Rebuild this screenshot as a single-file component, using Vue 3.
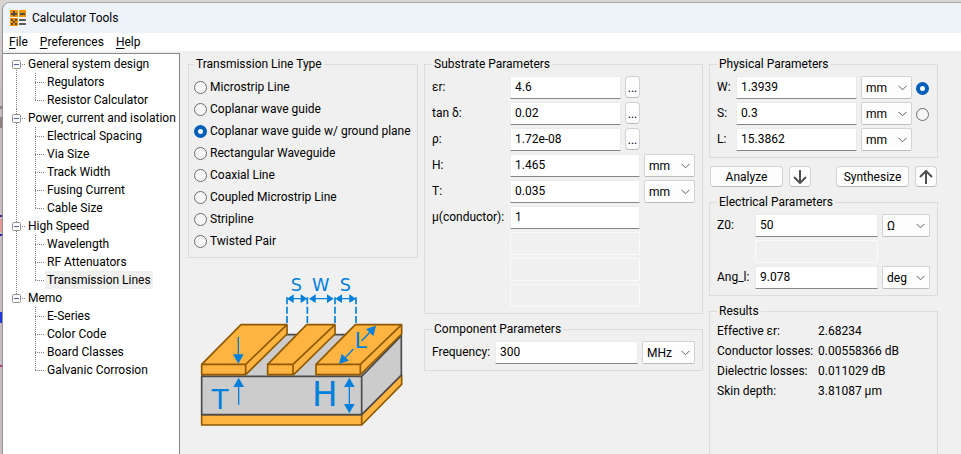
<script setup>
import { reactive, ref } from 'vue'

const tree = reactive([
  { label: 'General system design', open: true, items: ['Regulators', 'Resistor Calculator'] },
  {
    label: 'Power, current and isolation',
    open: true,
    items: ['Electrical Spacing', 'Via Size', 'Track Width', 'Fusing Current', 'Cable Size'],
  },
  { label: 'High Speed', open: true, items: ['Wavelength', 'RF Attenuators', 'Transmission Lines'] },
  { label: 'Memo', open: true, items: ['E-Series', 'Color Code', 'Board Classes', 'Galvanic Corrosion'] },
])
const page = ref('Transmission Lines')

const lineTypes = [
  'Microstrip Line',
  'Coplanar wave guide',
  'Coplanar wave guide w/ ground plane',
  'Rectangular Waveguide',
  'Coaxial Line',
  'Coupled Microstrip Line',
  'Stripline',
  'Twisted Pair',
]
const lineType = ref('Coplanar wave guide w/ ground plane')

const lengths = ['mm', 'um', 'cm', 'mil', 'inch']
const substrate = reactive([
  { id: 'er', label: 'εr:', value: '4.6', more: true },
  { id: 'tand', label: 'tan δ:', value: '0.02', more: true },
  { id: 'rho', label: 'ρ:', value: '1.72e-08', more: true },
  { id: 'h', label: 'H:', value: '1.465', unit: 'mm' },
  { id: 't', label: 'T:', value: '0.035', unit: 'mm' },
  { id: 'mu', label: 'μ(conductor):', value: '1' },
  { id: 'x1', label: '', value: '', off: true },
  { id: 'x2', label: '', value: '', off: true },
  { id: 'x3', label: '', value: '', off: true },
])

const frequency = reactive({ value: '300', unit: 'MHz' })

const physical = reactive([
  { id: 'w', label: 'W:', value: '1.3939', unit: 'mm', target: true },
  { id: 's', label: 'S:', value: '0.3', unit: 'mm', target: true },
  { id: 'l', label: 'L:', value: '15.3862', unit: 'mm', target: false },
])
const solveFor = ref('w')

const electrical = reactive([
  { id: 'z0', label: 'Z0:', value: '50', unit: 'Ω', units: ['Ω', 'kΩ'] },
  { id: 'x4', label: '', value: '', off: true },
  { id: 'ang', label: 'Ang_l:', value: '9.078', unit: 'deg', units: ['deg', 'rad'] },
])

const results = [
  ['Effective εr:', '2.68234'],
  ['Conductor losses:', '0.00558366 dB'],
  ['Dielectric losses:', '0.011029 dB'],
  ['Skin depth:', '3.81087 µm'],
]
</script>

<template>
  <div class="desktop">
    <div class="window">
      <header class="titlebar">
        <svg class="app-icon" viewBox="0 0 16 16" aria-hidden="true">
          <g fill="#f39200">
            <rect width="8" height="7" rx="1" />
            <rect x="9" width="7" height="7" rx="1" />
            <rect y="8" width="8" height="8" rx="1" />
          </g>
          <rect x="9" y="8" width="7" height="8" fill="#f4f4f4" />
          <path d="M1 4h6M4 1v5M10 4h5" stroke="#4d4d4d" stroke-width="2" />
          <path d="M1 9h2v2H1zM5 9h2v2H5zM3 11h2v2H3zM1 13h2v2H1zM5 13h2v2H5z" fill="#5a4a30" />
          <path d="M9 10h7M9 14h7" stroke="#5c5c5c" stroke-width="2" />
        </svg>
        <span>Calculator Tools</span>
      </header>

      <nav class="menubar">
        <button type="button"><u>F</u>ile</button>
        <button type="button"><u>P</u>references</button>
        <button type="button"><u>H</u>elp</button>
      </nav>

      <div class="body">
        <aside class="tree">
          <ul class="groups">
            <li v-for="group in tree" :key="group.label" class="group">
              <div class="branch">
                <button
                  type="button"
                  class="toggle"
                  :aria-label="group.label"
                  :aria-expanded="group.open"
                  @click="group.open = !group.open"
                >
                  <svg viewBox="0 0 9 9">
                    <rect x=".5" y=".5" width="8" height="8" rx="1" fill="#fafafa" stroke="#919191" />
                    <path :d="group.open ? 'M2 4.5h5' : 'M2 4.5h5M4.5 2v5'" stroke="#4b63a7" />
                  </svg>
                </button>
                <span>{{ group.label }}</span>
              </div>
              <ul v-if="group.open" class="leaves">
                <li v-for="item in group.items" :key="item">
                  <button type="button" :class="{ selected: page === item }" @click="page = item">{{ item }}</button>
                </li>
              </ul>
            </li>
          </ul>
        </aside>

        <main class="panels">
          <div class="column">
            <fieldset class="types">
              <legend>Transmission Line Type</legend>
              <label v-for="name in lineTypes" :key="name">
                <input v-model="lineType" type="radio" name="line-type" :value="name" />
                {{ name }}
              </label>
            </fieldset>

            <svg class="drawing" viewBox="-6 0 690 567" role="img" aria-label="Coplanar wave guide with ground plane">
              <g stroke-width="5" stroke-linejoin="round">
                <path d="M35 449H515L635 330V358L515 480H35Z" fill="#ffb340" stroke="#8f5902" />
                <path d="M515 449V480" stroke="#8f5902" />
                <path d="M35 334L160 209H634V330L515 449H35Z" fill="#ccc" stroke="#4b4b4b" />
                <path d="M35 334H515V449M515 334L634 212" fill="none" stroke="#4b4b4b" />
                <g fill="#ffb340" stroke="#8f5902">
                  <path d="M35 298L153 179H291V207L167 329H35Z" />
                  <path d="M35 298H167V329M167 298L291 179" fill="none" />
                  <path d="M233 298L350 179H435V207L311 329H233Z" />
                  <path d="M233 298H309V329M309 298L435 179" fill="none" />
                  <path d="M378 298L496 179H635V207L511 329H378Z" />
                  <path d="M378 298H511V329M511 298L635 179" fill="none" />
                </g>
              </g>
              <g stroke="#0080dc" stroke-width="4" fill="none">
                <path
                  d="M291 97V177M352 97V177M435 97V177M498 97V177"
                  stroke-width="5"
                  stroke-dasharray="21 7"
                />
                <path d="M305 101H338M372 101H416M451 101H483" />
                <path d="M145 216V270M146 360V419M478 360V422M515 228L540 201M490 252L463 281" />
              </g>
              <g fill="#0080dc">
                <path d="M291 101L311 88V114ZM352 101L332 88V114ZM357 101L377 88V114ZM431 101L411 88V114ZM436 101L456 88V114ZM498 101L478 88V114Z" />
                <path d="M145 296L129 268H161ZM146 338L130 366H162ZM478 338L462 366H494ZM478 445L462 417H494Z" />
                <path d="M558 182L550 213L528 192ZM447 297L455 266L477 287Z" />
              </g>
              <g class="dimension">
                <text x="319" y="79" font-size="53">S</text>
                <text x="392" y="79" font-size="53">W</text>
                <text x="466" y="79" font-size="53">S</text>
                <text x="512" y="248" font-size="66">L</text>
                <text x="90" y="432" font-size="82">T</text>
                <text x="404" y="423" font-size="102">H</text>
              </g>
            </svg>
          </div>

          <div class="column">
            <fieldset class="grid substrate">
              <legend>Substrate Parameters</legend>
              <div v-for="row in substrate" :key="row.id" class="row" :class="{ short: row.more }">
                <label :for="row.id">{{ row.label }}</label>
                <input
                  :id="row.id"
                  v-model="row.value"
                  type="text"
                  :disabled="row.off"
                  :aria-label="row.off ? 'Unused' : undefined"
                />
                <button v-if="row.more" type="button" class="push more" :aria-label="'Choose ' + row.label">...</button>
                <select v-if="row.unit" v-model="row.unit" :aria-label="row.label + ' unit'">
                  <option v-for="u in lengths" :key="u">{{ u }}</option>
                </select>
              </div>
            </fieldset>

            <fieldset class="grid component">
              <legend>Component Parameters</legend>
              <div class="row">
                <label for="frequency">Frequency:</label>
                <input id="frequency" v-model="frequency.value" type="text" />
                <select v-model="frequency.unit" aria-label="Frequency unit">
                  <option>GHz</option>
                  <option>MHz</option>
                  <option>kHz</option>
                </select>
              </div>
            </fieldset>
          </div>

          <div class="column">
            <fieldset class="grid physical">
              <legend>Physical Parameters</legend>
              <div v-for="row in physical" :key="row.id" class="row">
                <label :for="'p-' + row.id">{{ row.label }}</label>
                <input :id="'p-' + row.id" v-model="row.value" type="text" />
                <select v-model="row.unit" :aria-label="row.label + ' unit'">
                  <option v-for="u in lengths" :key="u">{{ u }}</option>
                </select>
                <input
                  v-if="row.target"
                  v-model="solveFor"
                  type="radio"
                  name="solve-for"
                  :value="row.id"
                  :aria-label="'Solve for ' + row.label"
                />
              </div>
            </fieldset>

            <div class="actions">
              <button type="button" class="push wide">Analyze</button>
              <button type="button" class="push arrow" aria-label="Analyze">
                <svg viewBox="0 0 14 14"><path d="M7 0v12M1 7l6 6 6-6" /></svg>
              </button>
              <span class="spacer"></span>
              <button type="button" class="push wide">Synthesize</button>
              <button type="button" class="push arrow" aria-label="Synthesize">
                <svg viewBox="0 0 14 14"><path d="M7 14V2M1 7l6-6 6 6" /></svg>
              </button>
            </div>

            <fieldset class="grid electrical">
              <legend>Electrical Parameters</legend>
              <div v-for="row in electrical" :key="row.id" class="row">
                <label :for="row.id">{{ row.label }}</label>
                <input
                  :id="row.id"
                  v-model="row.value"
                  type="text"
                  :disabled="row.off"
                  :aria-label="row.off ? 'Unused' : undefined"
                />
                <select v-if="row.unit" v-model="row.unit" :aria-label="row.label + ' unit'">
                  <option v-for="u in row.units" :key="u">{{ u }}</option>
                </select>
              </div>
            </fieldset>

            <fieldset class="results">
              <legend>Results</legend>
              <dl>
                <template v-for="[name, value] in results" :key="name">
                  <dt>{{ name }}</dt>
                  <dd>{{ value }}</dd>
                </template>
              </dl>
            </fieldset>
          </div>
        </main>
      </div>
    </div>
  </div>
</template>

<style>
body {
  margin: 0;
  overflow: hidden;
}
</style>

<style scoped>
* {
  box-sizing: border-box;
}

.desktop {
  display: flex;
  height: 100vh;
  padding: 2px 0 0 2px;
  background:
    linear-gradient(#8a8488, #8a8488) 0 106px / 2px 3px no-repeat,
    linear-gradient(#94807e, #94807e) 0 117px / 2px 11px no-repeat,
    linear-gradient(#52218f, #52218f) 0 215px / 2px 2px no-repeat,
    linear-gradient(#e39a94, #e39a94) 0 219px / 2px 13px no-repeat,
    linear-gradient(#2a20b0, #2a20b0) 0 234px / 2px 2px no-repeat,
    linear-gradient(#2038d8, #2038d8) 0 312px / 2px 11px no-repeat,
    linear-gradient(#b03878, #b03878) 0 365px / 2px 2px no-repeat,
    linear-gradient(#d9d4d4, #c8bcc0 100px);
  font: 12px/16px Roboto, "Liberation Sans", sans-serif;
  color: #000;
}

.window {
  display: flex;
  flex: 1;
  flex-direction: column;
  min-width: 0;
  overflow: hidden;
  border-top: 1px solid #aaa6a7;
  border-left: 1px solid #929297;
  border-top-left-radius: 8px;
  background: #f0f0f0;
}

button,
input,
select {
  margin: 0;
  font: inherit;
  color: inherit;
}

.titlebar {
  display: flex;
  flex: none;
  align-items: center;
  gap: 6px;
  height: 30px;
  padding-left: 7px;
  background: #eef3f9;
}

.app-icon {
  width: 16px;
  height: 16px;
}

.menubar {
  display: flex;
  flex: none;
  gap: 12px;
  height: 18px;
  padding-left: 6px;
  background: #fff;
}

.menubar button {
  padding: 0;
  border: 0;
  background: none;
}

.menubar u {
  text-underline-offset: 2px;
}

.body {
  display: flex;
  flex: 1;
  min-height: 0;
}

/* Navigation tree */
.tree {
  flex: none;
  width: 177px;
  margin-top: 2px;
  padding: 1px 0 0 9px;
  border-top: 1px solid #828790;
  border-right: 1px solid #828790;
  background: #fff;
  overflow: hidden;
}

ul {
  margin: 0;
  padding: 0;
  list-style: none;
}

.group {
  background: repeating-linear-gradient(#808080 0 1px, transparent 1px 2px) 4px 0 / 1px 100% no-repeat;
}

.group:first-child {
  background-position: 4px 9px;
}

.group:last-child {
  background-size: 1px 9px;
}

.branch {
  display: flex;
  align-items: center;
  gap: 7px;
  height: 18px;
  background: repeating-linear-gradient(90deg, #808080 0 1px, transparent 1px 2px) 10px 9px / 4px 1px no-repeat;
  white-space: nowrap;
}

.toggle {
  flex: none;
  width: 9px;
  height: 9px;
  padding: 0;
  border: 0;
  background: none;
}

.toggle svg {
  display: block;
}

.leaves {
  padding-left: 23px;
}

.leaves li {
  display: flex;
  height: 18px;
  padding-left: 10px;
  background:
    repeating-linear-gradient(#808080 0 1px, transparent 1px 2px) 0 0 / 1px 100% no-repeat,
    repeating-linear-gradient(90deg, #808080 0 1px, transparent 1px 2px) 0 9px / 9px 1px no-repeat;
}

.leaves li:last-child {
  background-size: 1px 9px, 9px 1px;
}

.leaves button {
  padding: 0 2px;
  border: 0;
  background: none;
  white-space: nowrap;
}

.leaves button.selected {
  background: #f0f0f0;
}

/* Panels */
.panels {
  display: grid;
  flex: 1;
  grid-template-columns: minmax(0, 230fr) minmax(0, 279fr) minmax(0, 229fr);
  gap: 6px;
  min-width: 0;
  padding: 5px 23px 0 8px;
}

.column {
  display: flex;
  flex-direction: column;
  gap: 7px;
  min-height: 0;
}

fieldset {
  min-width: 0;
  margin: 0;
  padding: 4px 7px 5px;
  border: 1px solid #dcdcdc;
}

legend {
  padding: 0 2px;
  white-space: nowrap;
}

.types {
  padding: 4px 5px 5px;
}

.types label {
  display: flex;
  align-items: center;
  gap: 3px;
  height: 22px;
  white-space: nowrap;
}

.drawing {
  display: block;
  width: 100%;
}

.dimension {
  fill: #0080dc;
  font-family: "DejaVu Sans", sans-serif;
  text-anchor: middle;
}

.grid {
  display: flex;
  flex-direction: column;
}

.row {
  display: grid;
  align-items: start;
  column-gap: 4px;
  height: 24px;
}

.row + .row {
  margin-top: 2px;
}

.row label {
  line-height: 23px;
  white-space: nowrap;
}

.substrate .row {
  grid-template-columns: 74px 1fr 51px;
}

.substrate .row.short {
  grid-template-columns: 74px 1fr 15px 51px;
}

.component .row {
  grid-template-columns: 59px 1fr 53px;
}

.physical .row {
  grid-template-columns: 15px 1fr 51px 14px;
}

.electrical .row {
  grid-template-columns: 34px 1fr 48px;
}

input[type='text'] {
  width: 100%;
  min-width: 0;
  height: 23px;
  padding: 0 4px 1px;
  border: 1px solid #ebebeb;
  border-bottom-color: #868686;
  border-radius: 1px;
  outline: 0;
  background: #fff;
}

input[type='text']:disabled {
  border-color: #fafafa;
  background: #f0f0f0;
}

input[type='radio'] {
  flex: none;
  align-self: center;
  width: 13px;
  height: 13px;
  border: 1px solid #6e6e6e;
  border-radius: 50%;
  background: #f6f6f6;
  appearance: none;
}

input[type='radio']:checked {
  border: 4px solid #005fb8;
  background: #fff;
}

select {
  width: 100%;
  height: 23px;
  padding: 1px 0 0 4px;
  border: 1px solid #d2d2d2;
  border-bottom-color: #bcbcbc;
  border-radius: 2px;
  background: #fdfdfd
    url("data:image/svg+xml,%3Csvg xmlns='http://www.w3.org/2000/svg' width='9' height='6'%3E%3Cpath d='M.5 .8l4 4 4-4' fill='none' stroke='%23606060'/%3E%3C/svg%3E")
    right 4px center no-repeat;
  appearance: none;
}

.push {
  padding: 0;
  border: 1px solid #d2d2d2;
  border-bottom-color: #bcbcbc;
  border-radius: 4px;
  background: #fdfdfd;
}

.more {
  width: 15px;
  height: 22px;
  padding-top: 2px;
}

.actions {
  display: flex;
  gap: 6px;
  padding: 1px 1px 0;
}

.spacer {
  flex: 1;
}

.wide {
  width: 73px;
  height: 21px;
}

.arrow {
  display: grid;
  place-items: center;
  width: 22px;
  height: 21px;
}

.arrow svg {
  width: 14px;
  height: 14px;
  fill: none;
  stroke: #505050;
  stroke-width: 2;
}

.results {
  flex: 1;
  padding-top: 2px;
  border-bottom: 0;
}

dl {
  display: grid;
  grid-template-columns: 101px 1fr;
  margin: 0;
  line-height: 20px;
  white-space: nowrap;
}

dd {
  margin: 0;
}
</style>
